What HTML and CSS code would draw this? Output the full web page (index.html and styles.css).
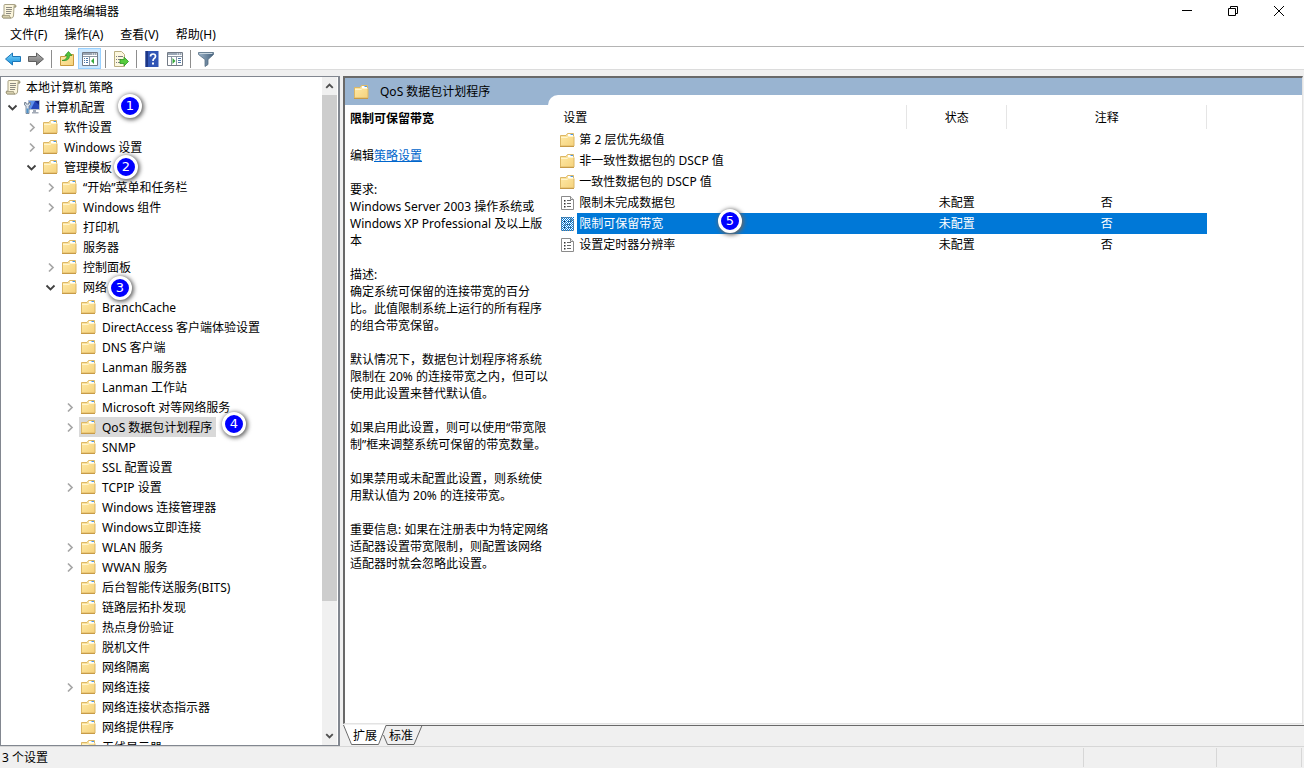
FILE: index.html
```
<!DOCTYPE html>
<html lang="zh-CN">
<head>
<meta charset="utf-8">
<title>本地组策略编辑器</title>
<link rel="stylesheet" href="styles.css">
</head>
<body>
<svg class="defs" aria-hidden="true">
  <defs>
    <linearGradient id="gold" x1="0" y1="0" x2="1" y2="1"><stop offset="0" stop-color="#ffeaa8"/><stop offset="1" stop-color="#f5d27c"/></linearGradient>
    <linearGradient id="sky" x1="0" y1="0" x2="0" y2="1"><stop offset="0" stop-color="#7fd4fa"/><stop offset="1" stop-color="#1590dd"/></linearGradient>
    <linearGradient id="steel" x1="0" y1="0" x2="0" y2="1"><stop offset="0" stop-color="#b5b5b5"/><stop offset="1" stop-color="#6f6f6f"/></linearGradient>
    <linearGradient id="funnel" x1="0" y1="0" x2="1" y2="0"><stop offset="0" stop-color="#9db4c8"/><stop offset="1" stop-color="#44607c"/></linearGradient>
    <pattern id="dither" width="2" height="2" patternUnits="userSpaceOnUse"><path d="M0 0h1v1H0zM1 1h1v1H1z" fill="#0078d7"/></pattern>
  </defs>
  <symbol id="folder" viewBox="0 0 16 16">
    <path d="M.500 3.500H6l1.500-2h6v3h.5v9.500H.500z" fill="url(#gold)" stroke="#dcb766"/>
    <path d="M8 2h5v2H8z" fill="#fff"/><path d="M10.500 2.500h2.500" stroke="#4a9be8"/>
    <path d="M1 5.500h6l1.500-1H13.500" stroke="#fff4cd" fill="none"/>
    <path d="M0 14.500h14" stroke="#c79b48"/>
  </symbol>
  <symbol id="scroll" viewBox="0 0 16 16">
    <path d="M3.500 1.500h10q1.800 0 1.500 2.500h-2l-.5 9q-.5 2-2 2H2q-1.500-1-.5-3H3l0-9q0-1.500.5-1.500z" fill="#fbf5dc" stroke="#a8a286"/>
    <path d="M13 4V2.500q.5-1 1.500 0V4zM1.500 12.500h7q0 2 1.500 2.500H2.500q-1.500-.5-1-2.500z" fill="#d6cfad" stroke="#928c70" stroke-width=".7"/>
    <path d="M5 4.500h6M5 6.500h6M5 8.500h5.500M5 10.500h5" stroke="#8d8b83"/>
  </symbol>
  <symbol id="computer" viewBox="0 0 16 16">
    <path d="M4.500 1.500h11v9h-11z" fill="#2446ba" stroke="#b4bfce"/>
    <path d="M5 2h6l-4 8H5z" fill="#5f91eb"/><path d="M11 2h4v4z" fill="#13247f"/>
    <path d="M9 11h3v2h2.500v1.500H8V13h1z" fill="#a3abb7"/>
    <path d="M.500 3.500v2.500L2 7v7.500h3V7l1.500-1V3.500h-1.500V5H2V3.500z" fill="#dbe3ed" stroke="#667587" stroke-width=".8"/>
    <path d="M2.500 9.500h2V14h-2z" fill="#4f92c8"/>
  </symbol>
  <symbol id="setting" viewBox="0 0 16 16">
    <path d="M1.500 1.500h9l3 3v10h-12z" fill="#fff" stroke="#8b8b8b"/>
    <path d="M10.500 1.500v3h3" fill="#eee" stroke="#8b8b8b"/>
    <path d="M4 5h1.500v1.500H4zM4 8h1.500v1.500H4zM4 11h1.500v1.500H4z" fill="#333"/>
    <path d="M7 5.500h4M7 8.500h4M7 11.500h4" stroke="#666"/>
  </symbol>
  <symbol id="closed" viewBox="0 0 12 12"><path d="M4 2.500l4 4-4 4" fill="none" stroke="#a6a6a6" stroke-width="1.700"/></symbol>
  <symbol id="open" viewBox="0 0 12 12"><path d="M1.500 4.500l4 4 4-4" fill="none" stroke="#404040" stroke-width="1.800"/></symbol>
  <symbol id="arrow" viewBox="0 0 16 16"><path d="M.500 8l7-6v3.500h8v5h-8V14z" stroke-linejoin="round"/></symbol>
  <symbol id="panel" viewBox="0 0 16 16">
    <path d="M.500 1.500h15v13H.500z" fill="#fff" stroke="#737b86"/>
    <path d="M1 2h14v2H1z" fill="#9aa6b4"/><path d="M10 3h1M12 3h1M14 3h1" stroke="#fff"/>
    <path d="M1 5.500h14" stroke="#8b96a4"/>
  </symbol>
</svg>

<div class="window">
  <header class="titlebar">
    <svg class="icon"><use href="#scroll"/></svg>
    <h1 class="title">本地组策略编辑器</h1>
    <div class="caption">
      <button aria-label="最小化"><svg class="glyph" viewBox="0 0 12 12"><path d="M1 5.500h10"/></svg></button>
      <button aria-label="还原"><svg class="glyph" viewBox="0 0 12 12"><path d="M1.500 3.500h7v7h-7zM3.500 3.500v-2h7v7h-2"/></svg></button>
      <button aria-label="关闭"><svg class="glyph" viewBox="0 0 12 12"><path d="M1 1l10 10M11 1L1 11"/></svg></button>
    </div>
  </header>
  <nav class="menubar">
    <button>文件(F)</button><button>操作(A)</button><button>查看(V)</button><button>帮助(H)</button>
  </nav>
  <div class="toolbar">
    <button aria-label="后退"><svg class="icon" fill="url(#sky)" stroke="#1d76b7"><use href="#arrow"/></svg></button>
    <button aria-label="前进"><svg class="icon flip" fill="url(#steel)" stroke="#5f5f5f"><use href="#arrow"/></svg></button>
    <span class="sep"></span>
    <button aria-label="上一级"><svg class="icon" viewBox="0 0 16 16"><path d="M1.500 5.500h5l1-2h7v11h-13z" fill="url(#gold)" stroke="#c9993d"/><path d="M3 9.500q5-.5 5-5H6l3.500-4 3.500 4h-2.500q0 6-7.500 5z" fill="#4fc43c" stroke="#2b8b22" stroke-width=".7"/></svg></button>
    <button class="pressed" aria-label="显示/隐藏控制台树"><svg class="icon" viewBox="0 0 16 16"><use href="#panel"/><path d="M7.500 6v8" stroke="#8b96a4"/><path d="M2 7.500h1M4 7.500h2M2 9.500h1M4 9.500h2M2 11.500h1M4 11.500h2" stroke="#4d78a8"/><path d="M12 7v6L9 10z" fill="#35a83a"/></svg></button>
    <span class="sep"></span>
    <button aria-label="导出列表"><svg class="icon" viewBox="0 0 16 16"><path d="M1.500.500h7l3 3v12h-10z" fill="#fdf8df" stroke="#b9ae80"/><path d="M3 5.500h1M5 5.500h5M3 8.500h1M5 8.500h3M3 11.500h1M5 11.500h3" stroke="#7d7b83"/><path d="M7 8.500h4V6l4.500 4.500L11 15v-2.500H7z" fill="#55cc3c" stroke="#2f9425" stroke-width=".8"/></svg></button>
    <span class="sep"></span>
    <button aria-label="帮助"><svg class="icon" viewBox="0 0 16 16"><path d="M1.500 0h13v16h-13z" fill="#3155b5"/><path d="M1.500 0h2.500v16H1.500z" fill="#1d3786"/><path d="M6.500 5.500q0-2.500 2.500-2.500t2.500 2.200Q11.500 6.500 10 7.700 9 8.500 9 10" fill="none" stroke="#fff" stroke-width="1.700"/><path d="M8 11.500h2v2H8z" fill="#fff"/></svg></button>
    <button aria-label="显示/隐藏操作窗格"><svg class="icon" viewBox="0 0 16 16"><use href="#panel"/><path d="M9.500 6v8M4.500 6v8" stroke="#8b96a4"/><path d="M11 7.500h3M11 9.500h3M11 11.500h3" stroke="#4d78a8"/><path d="M5.500 7v6l3-3z" fill="#35a83a"/></svg></button>
    <span class="sep"></span>
    <button aria-label="筛选器"><svg class="icon" viewBox="0 0 16 16"><path d="M.500 1.500h15v2l-5.500 5v5l-3 2v-7L.500 3.500z" fill="url(#funnel)" stroke="#566e84" stroke-width=".8"/><path d="M1.500 2.500h13" stroke="#c8d5df"/></svg></button>
  </div>

  <main class="panes">
    <section class="treepane">
      <ul class="tree">
        <li><div class="row"><svg class="icon"><use href="#scroll"/></svg><span>本地计算机 策略</span></div>
        <ul class="first">
          <li><div class="row"><svg class="chev"><use href="#open"/></svg><svg class="icon"><use href="#computer"/></svg><span>计算机配置</span></div>
          <ul>
            <li><div class="row"><svg class="chev"><use href="#closed"/></svg><svg class="icon"><use href="#folder"/></svg><span>软件设置</span></div></li>
            <li><div class="row"><svg class="chev"><use href="#closed"/></svg><svg class="icon"><use href="#folder"/></svg><span>Windows 设置</span></div></li>
            <li><div class="row"><svg class="chev"><use href="#open"/></svg><svg class="icon"><use href="#folder"/></svg><span>管理模板</span></div>
            <ul>
              <li><div class="row"><svg class="chev"><use href="#closed"/></svg><svg class="icon"><use href="#folder"/></svg><span>“开始”菜单和任务栏</span></div></li>
              <li><div class="row"><svg class="chev"><use href="#closed"/></svg><svg class="icon"><use href="#folder"/></svg><span>Windows 组件</span></div></li>
              <li><div class="row"><svg class="chev"></svg><svg class="icon"><use href="#folder"/></svg><span>打印机</span></div></li>
              <li><div class="row"><svg class="chev"></svg><svg class="icon"><use href="#folder"/></svg><span>服务器</span></div></li>
              <li><div class="row"><svg class="chev"><use href="#closed"/></svg><svg class="icon"><use href="#folder"/></svg><span>控制面板</span></div></li>
              <li><div class="row"><svg class="chev"><use href="#open"/></svg><svg class="icon"><use href="#folder"/></svg><span>网络</span></div>
              <ul>
                <li><div class="row"><svg class="chev"></svg><svg class="icon"><use href="#folder"/></svg><span>BranchCache</span></div></li>
                <li><div class="row"><svg class="chev"></svg><svg class="icon"><use href="#folder"/></svg><span>DirectAccess 客户端体验设置</span></div></li>
                <li><div class="row"><svg class="chev"></svg><svg class="icon"><use href="#folder"/></svg><span>DNS 客户端</span></div></li>
                <li><div class="row"><svg class="chev"></svg><svg class="icon"><use href="#folder"/></svg><span>Lanman 服务器</span></div></li>
                <li><div class="row"><svg class="chev"></svg><svg class="icon"><use href="#folder"/></svg><span>Lanman 工作站</span></div></li>
                <li><div class="row"><svg class="chev"><use href="#closed"/></svg><svg class="icon"><use href="#folder"/></svg><span>Microsoft 对等网络服务</span></div></li>
                <li><div class="row"><svg class="chev"><use href="#closed"/></svg><div class="current"><svg class="icon"><use href="#folder"/></svg><span>QoS 数据包计划程序</span></div></div></li>
                <li><div class="row"><svg class="chev"></svg><svg class="icon"><use href="#folder"/></svg><span>SNMP</span></div></li>
                <li><div class="row"><svg class="chev"></svg><svg class="icon"><use href="#folder"/></svg><span>SSL 配置设置</span></div></li>
                <li><div class="row"><svg class="chev"><use href="#closed"/></svg><svg class="icon"><use href="#folder"/></svg><span>TCPIP 设置</span></div></li>
                <li><div class="row"><svg class="chev"></svg><svg class="icon"><use href="#folder"/></svg><span>Windows 连接管理器</span></div></li>
                <li><div class="row"><svg class="chev"></svg><svg class="icon"><use href="#folder"/></svg><span>Windows立即连接</span></div></li>
                <li><div class="row"><svg class="chev"><use href="#closed"/></svg><svg class="icon"><use href="#folder"/></svg><span>WLAN 服务</span></div></li>
                <li><div class="row"><svg class="chev"><use href="#closed"/></svg><svg class="icon"><use href="#folder"/></svg><span>WWAN 服务</span></div></li>
                <li><div class="row"><svg class="chev"></svg><svg class="icon"><use href="#folder"/></svg><span>后台智能传送服务(BITS)</span></div></li>
                <li><div class="row"><svg class="chev"></svg><svg class="icon"><use href="#folder"/></svg><span>链路层拓扑发现</span></div></li>
                <li><div class="row"><svg class="chev"></svg><svg class="icon"><use href="#folder"/></svg><span>热点身份验证</span></div></li>
                <li><div class="row"><svg class="chev"></svg><svg class="icon"><use href="#folder"/></svg><span>脱机文件</span></div></li>
                <li><div class="row"><svg class="chev"></svg><svg class="icon"><use href="#folder"/></svg><span>网络隔离</span></div></li>
                <li><div class="row"><svg class="chev"><use href="#closed"/></svg><svg class="icon"><use href="#folder"/></svg><span>网络连接</span></div></li>
                <li><div class="row"><svg class="chev"></svg><svg class="icon"><use href="#folder"/></svg><span>网络连接状态指示器</span></div></li>
                <li><div class="row"><svg class="chev"></svg><svg class="icon"><use href="#folder"/></svg><span>网络提供程序</span></div></li>
                <li><div class="row"><svg class="chev"></svg><svg class="icon"><use href="#folder"/></svg><span>无线显示器</span></div></li>
              </ul></li>
            </ul></li>
          </ul></li>
        </ul></li>
      </ul>
      <div class="scrollbar">
        <svg class="scrollarrow" viewBox="0 0 16 16"><path d="M4.500 10L8 6.500l3.500 3.500"/></svg>
        <div class="track"><div class="thumb"></div></div>
        <svg class="scrollarrow" viewBox="0 0 16 16"><path d="M4.500 6L8 9.500 11.500 6"/></svg>
      </div>
    </section>

    <section class="result">
      <div class="content">
        <div class="banner"><svg class="icon"><use href="#folder"/></svg><h2>QoS 数据包计划程序</h2></div>
        <div class="body">
          <article class="detail">
            <h3>限制可保留带宽</h3>
            <p>编辑<a href="#policy">策略设置</a></p>
            <p>要求:<br>Windows Server 2003 操作系统或<br>Windows XP Professional 及以上版<br>本</p>
            <p>描述:<br>确定系统可保留的连接带宽的百分<br>比。此值限制系统上运行的所有程序<br>的组合带宽保留。</p>
            <p>默认情况下，数据包计划程序将系统<br>限制在 20% 的连接带宽之内，但可以<br>使用此设置来替代默认值。</p>
            <p>如果启用此设置，则可以使用“带宽限<br>制”框来调整系统可保留的带宽数量。</p>
            <p>如果禁用或未配置此设置，则系统使<br>用默认值为 20% 的连接带宽。</p>
            <p>重要信息: 如果在注册表中为特定网络<br>适配器设置带宽限制，则配置该网络<br>适配器时就会忽略此设置。</p>
          </article>
          <div class="listwrap">
            <table class="list">
              <colgroup><col class="c-icon"><col class="c-name"><col class="c-state"><col class="c-note"></colgroup>
              <thead><tr><th colspan="2" class="name">设置</th><th>状态</th><th>注释</th></tr></thead>
              <tbody>
                <tr><td><svg class="icon"><use href="#folder"/></svg></td><td class="name">第 2 层优先级值</td><td></td><td></td></tr>
                <tr><td><svg class="icon"><use href="#folder"/></svg></td><td class="name">非一致性数据包的 DSCP 值</td><td></td><td></td></tr>
                <tr><td><svg class="icon"><use href="#folder"/></svg></td><td class="name">一致性数据包的 DSCP 值</td><td></td><td></td></tr>
                <tr><td><svg class="icon"><use href="#setting"/></svg></td><td class="name">限制未完成数据包</td><td>未配置</td><td>否</td></tr>
                <tr class="selected"><td><svg class="icon" viewBox="0 0 16 16"><use href="#setting"/><path d="M1 1h13v14H1z" fill="url(#dither)"/></svg></td><td class="name">限制可保留带宽</td><td>未配置</td><td>否</td></tr>
                <tr><td><svg class="icon"><use href="#setting"/></svg></td><td class="name">设置定时器分辨率</td><td>未配置</td><td>否</td></tr>
              </tbody>
            </table>
          </div>
        </div>
      </div>
      <div class="tabs">
        <svg class="tabshape" viewBox="0 0 80 21"><path d="M0 0l8 20h28l7-20z" fill="#fff"/><path d="M.500 0L8.500 19.500h27L43 .500h36l-8 19H44.500l-4-9.500" fill="none" stroke="#696969"/></svg>
        <button>扩展</button><button>标准</button>
      </div>
    </section>
  </main>
  <footer class="status"><span class="grow">3 个设置</span><span class="cell wide"></span><span class="cell narrow"></span></footer>

  <span class="pin pin1">1</span>
  <span class="pin pin2">2</span>
  <span class="pin pin3">3</span>
  <span class="pin pin4">4</span>
  <span class="pin pin5">5</span>
</div>
</body>
</html>
```
FILE: styles.css
```
* { box-sizing: border-box; }
body {
  margin: 0;
  background: #f0f0f0;
  color: #000;
  font: 12px/17px "Noto Sans", "Noto Sans CJK SC", sans-serif;
}
h1, h2, h3, p, ul { margin: 0; padding: 0; font-size: 12px; font-weight: 400; }
ul { list-style: none; }
button { margin: 0; padding: 0; border: 0; background: none; color: inherit; font: inherit; }
svg { display: block; flex: none; }
.defs { position: absolute; width: 0; height: 0; }
.icon { width: 16px; height: 16px; }
.window { position: relative; display: flex; flex-direction: column; height: 100vh; overflow: hidden; }

.titlebar { display: flex; align-items: center; height: 22px; padding-left: 1px; gap: 6px; background: #fff; flex: none; }
.title { flex: 1; }
.caption { display: flex; }
.caption button { width: 46px; height: 20px; display: grid; place-items: center; }
.caption button:last-child { margin-right: 2px; }
.glyph { width: 12px; height: 12px; fill: none; stroke: #000; }

.menubar { display: flex; gap: 17px; height: 25px; padding: 1px 0 0 10px; background: #fff; border-bottom: 1px solid #b4b4b4; flex: none; }
.toolbar { display: flex; align-items: center; height: 23px; padding: 1px 0 0 1px; background: #fff; border-bottom: 1px solid #dcdcdc; flex: none; }
.toolbar button { width: 23px; height: 21px; display: grid; place-items: center; }
.toolbar .pressed { background: #cce8ff; border: 1px solid #99d1ff; }
.sep { width: 1px; height: 18px; margin: 0 3px 0 4px; background: #8d8d8d; }
.flip { transform: scaleX(-1); }

.panes { display: flex; gap: 3px; flex: 1; min-height: 0; padding-top: 6px; }
.treepane { display: flex; flex: 0 0 340px; min-width: 0; background: #fff; border: 1px solid #828790; border-right-width: 2px; overflow: hidden; }
.tree { flex: 1; padding-left: 4px; overflow: hidden; }
.tree ul { padding-left: 19px; }
.tree .first { padding-left: 2px; }
.row { display: flex; align-items: center; gap: 5px; height: 20px; white-space: nowrap; }
.chev { width: 12px; height: 12px; }
.current { display: flex; align-items: center; gap: 5px; height: 20px; margin-left: -2px; padding: 0 4px 0 2px; background: #d9d9d9; }
.scrollbar { display: flex; flex-direction: column; align-items: stretch; width: 15px; margin-right: 1px; background: #f0f0f0; }
.scrollarrow { width: 15px; height: 18px; fill: none; stroke: #505050; stroke-width: 2; }
.track { flex: 1; }
.thumb { height: 80%; background: #cdcdcd; }

.result { display: flex; flex-direction: column; flex: 1; min-width: 0; }
.content { display: flex; flex-direction: column; flex: 1; min-height: 0; margin: 0 1px 1px 0; background: #fff; border: solid; border-width: 2px 1px 1px 2px; border-color: #696969 #e3e3e3 #e3e3e3 #696969; }
.banner { display: flex; align-items: center; gap: 10px; height: 27px; padding-left: 9px; background: #99b4d1; flex: none; }
.body { display: flex; flex: 1; min-height: 0; }
.detail { flex: 0 0 202px; padding: 5px 0 0 5px; white-space: nowrap; }
.detail h3 { margin-bottom: 20px; font-weight: 700; }
.detail p { margin-bottom: 17px; }
.detail a { color: #0066cc; }
.listwrap { flex: 1; margin-top: -10px; padding: 10px 0 0 12px; background: #fff; border-top-left-radius: 10px; }
.list { width: 647px; table-layout: fixed; border-collapse: collapse; }
.c-icon { width: 17px; }
.c-state { width: 100px; }
.c-note { width: 200px; }
.list th, .list td { height: 21px; padding: 0; font-weight: 400; text-align: center; white-space: nowrap; }
.list th { height: 24px; border-right: 1px solid #e5e5e5; }
.list .name { padding-left: 2px; text-align: left; }
.list th.name { padding-left: 3px; }
.selected td:not(:first-child) { background: #0078d7; color: #fff; }

.tabs { position: relative; display: flex; gap: 12px; height: 21px; padding-left: 10px; border-top: 1px solid #696969; flex: none; }
.tabs button { position: relative; height: 19px; }
.tabshape { position: absolute; left: 0; top: -1px; width: 80px; height: 21px; }
.status { display: flex; height: 22px; padding: 1px 2px 1px 2px; border-top: 1px solid #d7d7d7; flex: none; }
.grow { flex: 1; line-height: 20px; }
.cell { border-left: 1px solid #d7d7d7; }
.wide { width: 133px; }
.narrow { width: 86px; border-right: 1px solid #d7d7d7; }

.pin { position: absolute; width: 24px; height: 24px; border: 3px solid #fff; border-radius: 50%; background: #00f; color: #fff; box-shadow: 1px 1px 4px 1px #666; font: 13px/18px "DejaVu Sans", sans-serif; text-align: center; }
.pin1 { left: 118px; top: 94px; }
.pin2 { left: 114px; top: 155px; }
.pin3 { left: 108px; top: 276px; }
.pin4 { left: 222px; top: 412px; }
.pin5 { left: 718px; top: 209px; }
```
